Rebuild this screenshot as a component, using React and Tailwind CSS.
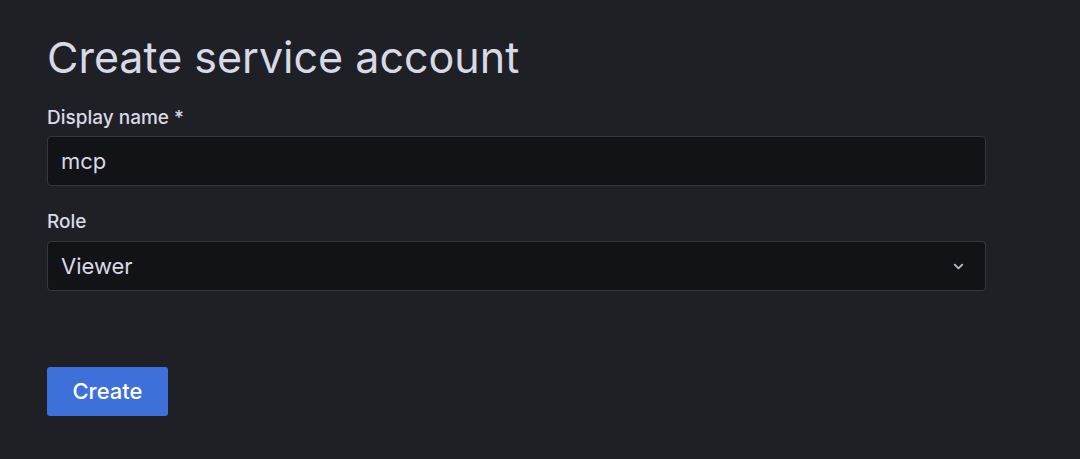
import React from "react";

export default function App() {
  return (
    <div className="w-[1080px] h-[459px] bg-[#1f2025] text-[#ccccdc] overflow-hidden" style={{ fontFamily: "Inter, 'Noto Sans', sans-serif" }}>
      <div className="pl-[47px] pt-[28px] w-[986px]">
        <h1 className="text-[43px] leading-[58px] font-normal text-[#d8d9e6]">Create service account</h1>
        <div className="mt-[20px]">
          <label className="block text-[19px] leading-[24px] font-medium text-[#d8d9e6] mb-[6px]">Display name *</label>
          <div className="h-[50px] w-[939px] rounded-[4px] border border-[#35373c] bg-[#121317] flex items-center px-[13px]">
            <span className="text-[22px] text-[#d8d9e6]">mcp</span>
          </div>
        </div>
        <div className="mt-[24px]">
          <label className="block text-[19px] leading-[24px] font-medium text-[#d8d9e6] mb-[7px]">Role</label>
          <div className="h-[50px] w-[939px] rounded-[4px] border border-[#35373c] bg-[#121317] flex items-center justify-between pl-[13px] pr-[19px]">
            <span className="text-[22px] text-[#d8d9e6]">Viewer</span>
            <svg width="15" height="15" viewBox="0 0 24 24" fill="none" stroke="#b8b9c4" strokeWidth="3" strokeLinecap="round" strokeLinejoin="round">
              <path d="M6 9l6 6 6-6" />
            </svg>
          </div>
        </div>
        <button className="mt-[76px] h-[49px] w-[121px] rounded-[3px] bg-[#3d71d9] text-white text-[22px] font-medium flex items-center justify-center">Create</button>
      </div>
    </div>
  );
}
